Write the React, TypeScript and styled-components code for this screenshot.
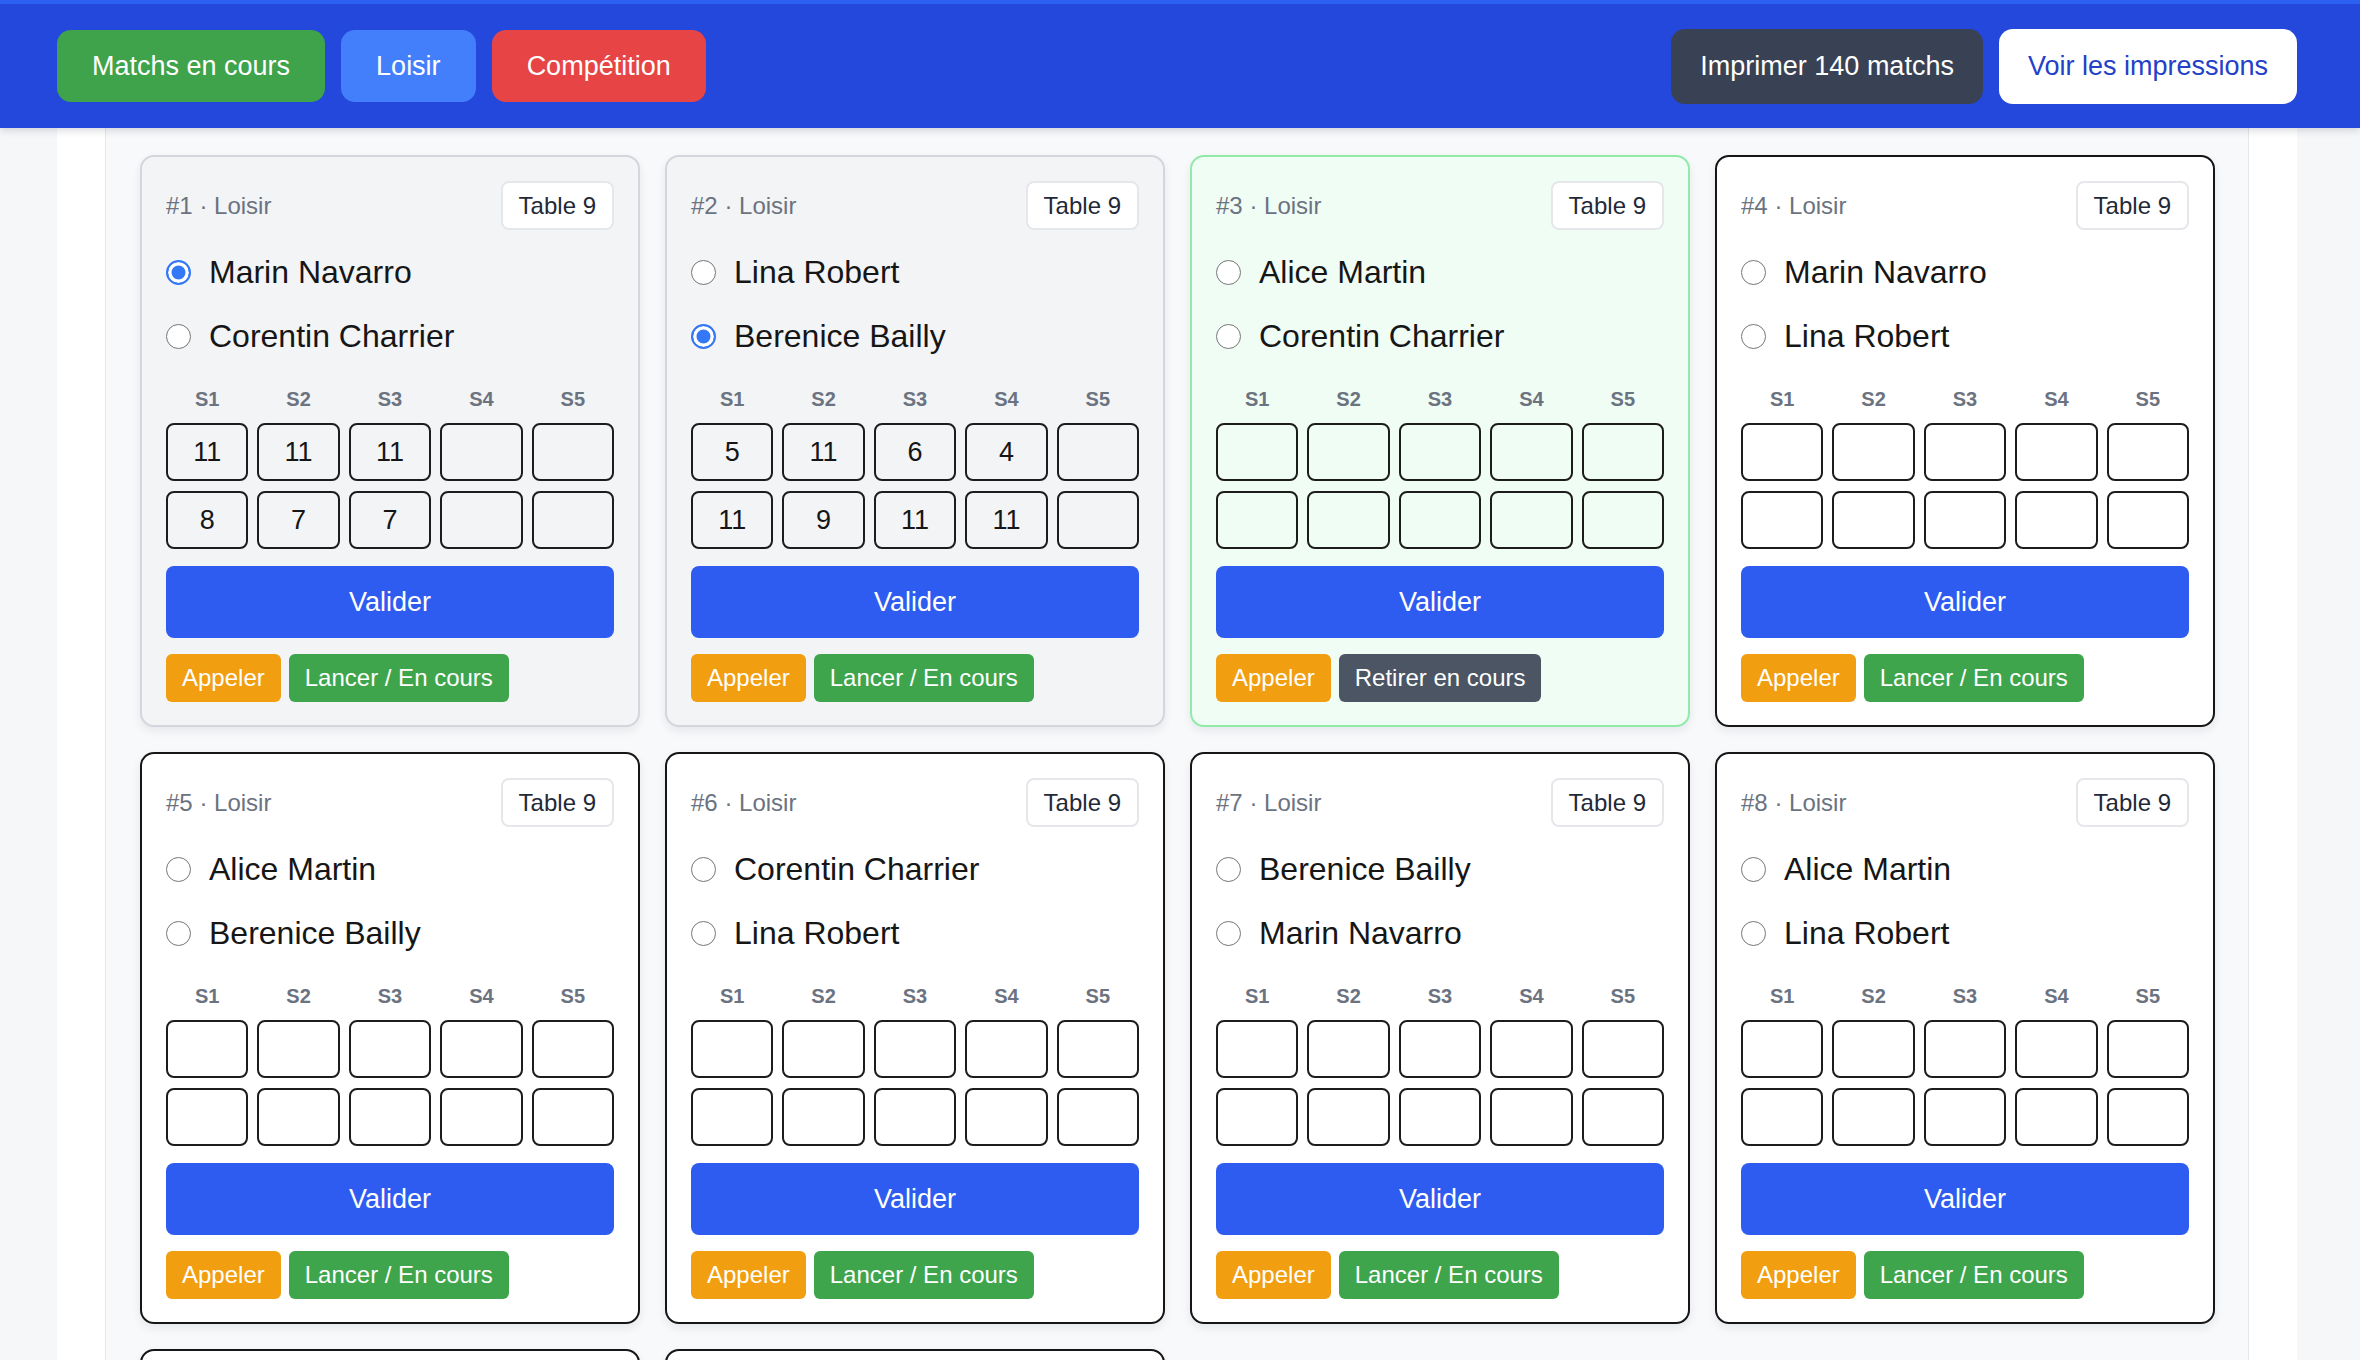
import styled, { createGlobalStyle, css } from "styled-components";

const GlobalStyle = createGlobalStyle`
  html, body {
    margin: 0;
    padding: 0;
    overflow: hidden;
    background: #f6f7f9;
    font-family: "Liberation Sans", Arial, sans-serif;
  }
  * {
    box-sizing: border-box;
  }
`;

const Header = styled.header`
  height: 128px;
  background: #2447dc;
  border-top: 4px solid #2c60f0;
  box-shadow: 0 2px 8px rgba(15, 23, 42, 0.18);
  position: relative;
  z-index: 2;
`;

const HeaderInner = styled.div`
  width: 2240px;
  margin-left: 57px;
  height: 100%;
  display: flex;
  align-items: center;
  justify-content: space-between;
`;

const ButtonGroup = styled.div`
  display: flex;
  align-items: center;
  gap: 16px;
`;

type TopButtonProps = {
  $bg: string;
  $color?: string;
  $tall?: boolean;
};

const TopButton = styled.button<TopButtonProps>`
  font-family: "Liberation Sans", Arial, sans-serif;
  font-size: 27px;
  border: none;
  border-radius: 14px;
  cursor: pointer;
  ${({ $bg, $color, $tall }) => css`
    background: ${$bg};
    color: ${$color ?? "#ffffff"};
    height: ${$tall ? "75px" : "72px"};
    padding: 0 ${$tall ? "29px" : "35px"};
  `}
`;

const Container = styled.main`
  width: 2240px;
  margin-left: 57px;
  background: #ffffff;
  padding: 0 48px;
`;

const Panel = styled.section`
  background: #f8f9fb;
  border-left: 1px solid #e5e7eb;
  border-right: 1px solid #e5e7eb;
  padding: 27px 33px 40px 34px;
`;

const CardGrid = styled.div`
  display: grid;
  grid-template-columns: repeat(4, 1fr);
  column-gap: 25px;
  row-gap: 25px;
`;

type Variant = "done" | "live" | "open";

const cardColors: Record<Variant, { bg: string; border: string }> = {
  done: { bg: "#f3f4f6", border: "#d3d6dc" },
  live: { bg: "#f0fdf4", border: "#92eaa9" },
  open: { bg: "#ffffff", border: "#161616" },
};

const Card = styled.article<{ $variant: Variant }>`
  border-radius: 14px;
  border: 2px solid;
  padding: 24px 24px 23px 24px;
  box-shadow: 0 4px 10px rgba(15, 23, 42, 0.08);
  display: flex;
  flex-direction: column;
  ${({ $variant }) => css`
    background: ${cardColors[$variant].bg};
    border-color: ${cardColors[$variant].border};
  `}
`;

const CardHead = styled.div`
  display: flex;
  align-items: center;
  justify-content: space-between;
  height: 49px;
`;

const MatchMeta = styled.span`
  font-size: 24px;
  color: #6b7280;
`;

const TableBadge = styled.span`
  font-size: 24px;
  color: #1f2937;
  background: #ffffff;
  border: 2px solid #e5e7eb;
  border-radius: 8px;
  height: 49px;
  padding: 0 16px;
  display: flex;
  align-items: center;
`;

const Players = styled.div`
  margin-top: 22px;
  display: flex;
  flex-direction: column;
  gap: 24px;
`;

const PlayerRow = styled.label`
  display: flex;
  align-items: center;
  gap: 18px;
  height: 40px;
  font-size: 32px;
  color: #161616;
`;

const Radio = styled.input`
  appearance: none;
  margin: 0;
  width: 25px;
  height: 25px;
  border-radius: 50%;
  border: 1.5px solid #767676;
  background: #ffffff;
  flex: none;

  &:checked {
    border: 2.5px solid #3478f6;
    background: #3478f6;
    box-shadow: inset 0 0 0 3.5px #ffffff;
  }
`;

const SetLabels = styled.div`
  margin-top: 31px;
  display: grid;
  grid-template-columns: repeat(5, 1fr);
  column-gap: 9px;
  height: 24px;
  align-items: center;
`;

const SetLabel = styled.span`
  text-align: center;
  font-size: 20px;
  font-weight: 700;
  color: #6b7280;
`;

const ScoreGrid = styled.div`
  margin-top: 12px;
  display: grid;
  grid-template-columns: repeat(5, 1fr);
  column-gap: 9px;
  row-gap: 10px;
`;

const ScoreInput = styled.input`
  width: 100%;
  height: 58px;
  border: 2px solid #1c1c1c;
  border-radius: 8px;
  background: transparent;
  font-family: "Liberation Sans", Arial, sans-serif;
  font-size: 27px;
  color: #161616;
  text-align: center;
  padding: 0;
  outline: none;
`;

const ValidateButton = styled.button`
  margin-top: 17px;
  height: 72px;
  width: 100%;
  border: none;
  border-radius: 8px;
  background: #2f5cf0;
  color: #ffffff;
  font-family: "Liberation Sans", Arial, sans-serif;
  font-size: 27px;
  cursor: pointer;
`;

const Actions = styled.div`
  margin-top: 16px;
  display: flex;
  gap: 8px;
`;

const ActionButton = styled.button<{ $bg: string }>`
  height: 48px;
  padding: 0 16px;
  border: none;
  border-radius: 6px;
  color: #ffffff;
  font-family: "Liberation Sans", Arial, sans-serif;
  font-size: 24px;
  cursor: pointer;
  background: ${({ $bg }) => $bg};
`;

type Score = number | "";

type Match = {
  id: number;
  variant: Variant;
  players: [string, string];
  winner?: 0 | 1;
  scores: [Score[], Score[]];
};

const empty: Score[] = ["", "", "", "", ""];

const matches: Match[] = [
  {
    id: 1,
    variant: "done",
    players: ["Marin Navarro", "Corentin Charrier"],
    winner: 0,
    scores: [
      [11, 11, 11, "", ""],
      [8, 7, 7, "", ""],
    ],
  },
  {
    id: 2,
    variant: "done",
    players: ["Lina Robert", "Berenice Bailly"],
    winner: 1,
    scores: [
      [5, 11, 6, 4, ""],
      [11, 9, 11, 11, ""],
    ],
  },
  { id: 3, variant: "live", players: ["Alice Martin", "Corentin Charrier"], scores: [empty, empty] },
  { id: 4, variant: "open", players: ["Marin Navarro", "Lina Robert"], scores: [empty, empty] },
  { id: 5, variant: "open", players: ["Alice Martin", "Berenice Bailly"], scores: [empty, empty] },
  { id: 6, variant: "open", players: ["Corentin Charrier", "Lina Robert"], scores: [empty, empty] },
  { id: 7, variant: "open", players: ["Berenice Bailly", "Marin Navarro"], scores: [empty, empty] },
  { id: 8, variant: "open", players: ["Alice Martin", "Lina Robert"], scores: [empty, empty] },
  { id: 9, variant: "open", players: ["Corentin Charrier", "Marin Navarro"], scores: [empty, empty] },
  { id: 10, variant: "open", players: ["Berenice Bailly", "Alice Martin"], scores: [empty, empty] },
];

function MatchCard({ match }: { match: Match }) {
  return (
    <Card $variant={match.variant}>
      <CardHead>
        <MatchMeta>#{match.id} · Loisir</MatchMeta>
        <TableBadge>Table 9</TableBadge>
      </CardHead>
      <Players>
        {match.players.map((name, i) => (
          <PlayerRow key={name}>
            <Radio
              type="radio"
              name={`winner-${match.id}`}
              defaultChecked={match.winner === i}
            />
            {name}
          </PlayerRow>
        ))}
      </Players>
      <SetLabels>
        {["S1", "S2", "S3", "S4", "S5"].map((s) => (
          <SetLabel key={s}>{s}</SetLabel>
        ))}
      </SetLabels>
      <ScoreGrid>
        {match.scores.map((row, r) =>
          row.map((v, c) => <ScoreInput key={`${r}-${c}`} defaultValue={v} />)
        )}
      </ScoreGrid>
      <ValidateButton>Valider</ValidateButton>
      <Actions>
        <ActionButton $bg="#f19e10">Appeler</ActionButton>
        {match.variant === "live" ? (
          <ActionButton $bg="#4b5563">Retirer en cours</ActionButton>
        ) : (
          <ActionButton $bg="#3ea54c">Lancer / En cours</ActionButton>
        )}
      </Actions>
    </Card>
  );
}

export default function App() {
  return (
    <>
      <GlobalStyle />
      <Header>
        <HeaderInner>
          <ButtonGroup>
            <TopButton $bg="#3fa34c">Matchs en cours</TopButton>
            <TopButton $bg="#447ffb">Loisir</TopButton>
            <TopButton $bg="#e74545">Compétition</TopButton>
          </ButtonGroup>
          <ButtonGroup>
            <TopButton $bg="#394254" $tall>
              Imprimer 140 matchs
            </TopButton>
            <TopButton $bg="#ffffff" $color="#2340c8" $tall>
              Voir les impressions
            </TopButton>
          </ButtonGroup>
        </HeaderInner>
      </Header>
      <Container>
        <Panel>
          <CardGrid>
            {matches.map((m) => (
              <MatchCard key={m.id} match={m} />
            ))}
          </CardGrid>
        </Panel>
      </Container>
    </>
  );
}
